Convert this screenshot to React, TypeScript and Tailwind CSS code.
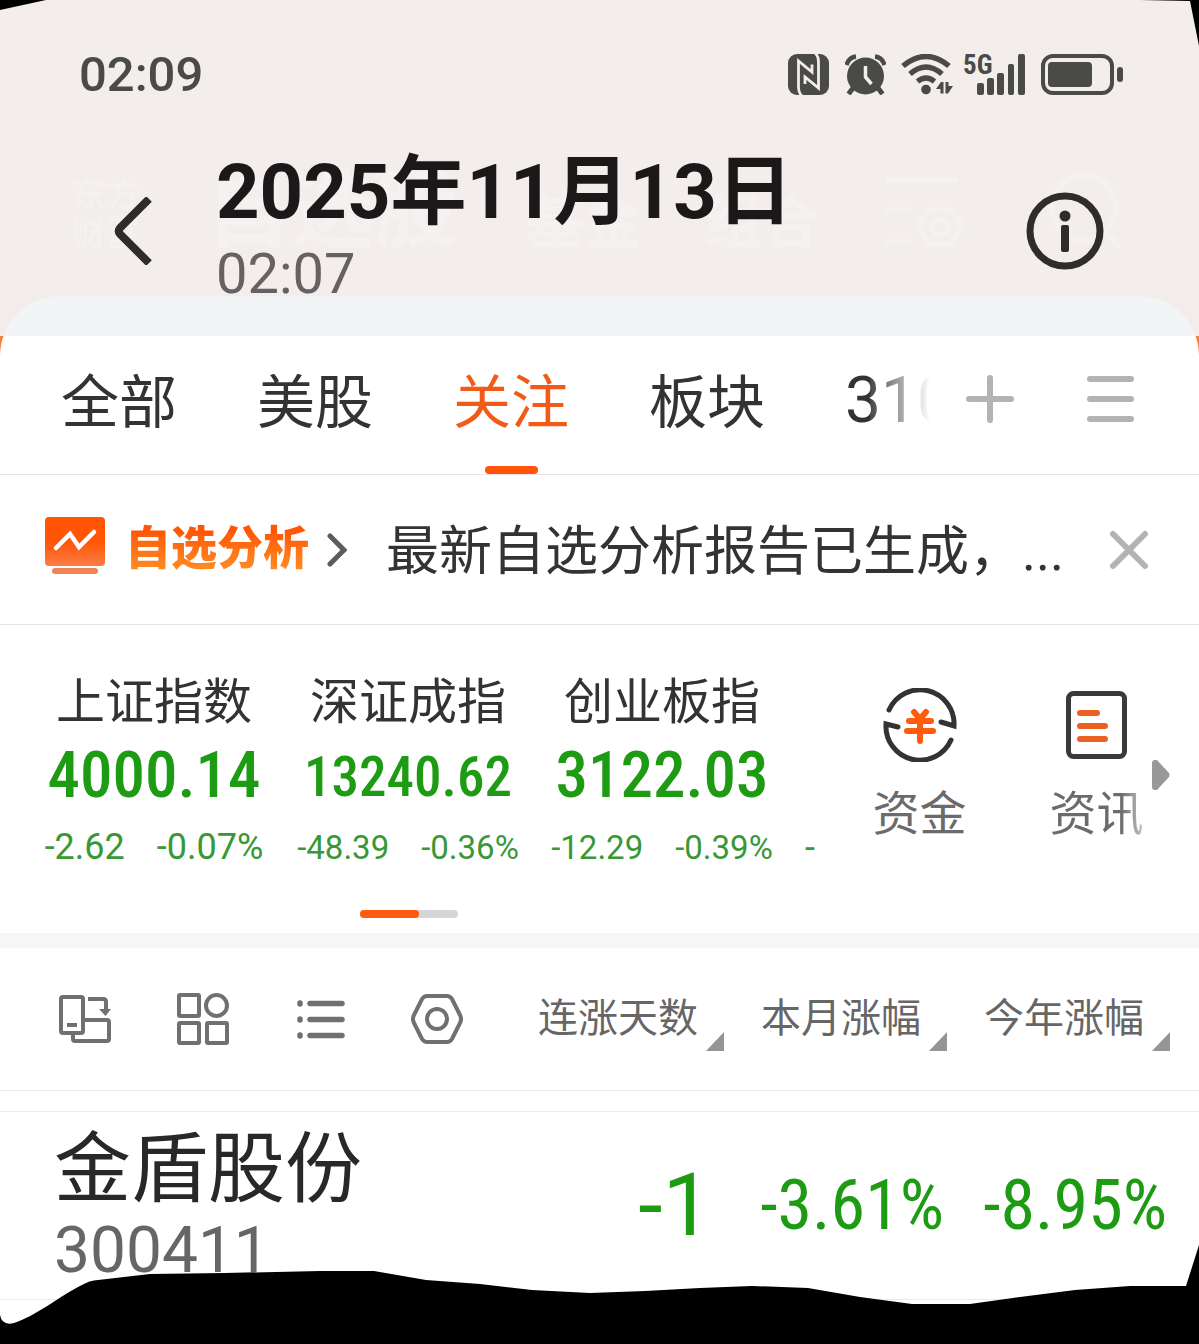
import React from "react";

const INK = "#4a4a49";

function NfcIcon() {
  return (
    <svg width="41" height="41" viewBox="0 0 41 41" fill="none">
      <rect width="41" height="41" rx="9" fill={INK} />
      <path d="M14 42Q10.500 39 10.500 33V7L24 18V10.500" stroke="#f3eeec" strokeWidth="2.800" />
      <path d="M27 -1Q30.500 2 30.500 8V34L17 23V30" stroke="#f3eeec" strokeWidth="2.800" />
    </svg>
  );
}

function AlarmIcon() {
  return (
    <svg width="41" height="41" viewBox="0 0 41 41" fill="none">
      <circle cx="20.500" cy="22" r="18.500" fill={INK} />
      <path d="M1.500 11C3 6 6 3 11 2.500M39.500 11C38 6 35 3 30 2.500" stroke={INK} strokeWidth="4.500" />
      <path d="M8 34L3.500 40M33 34L37.500 40" stroke={INK} strokeWidth="5" />
      <path d="M20.500 12V23L26.500 30" stroke="#f3eeec" strokeWidth="3.500" />
    </svg>
  );
}

function WifiIcon() {
  return (
    <svg width="52" height="41" viewBox="0 0 52 41" fill="none">
      <path d="M2 12Q25 -7 48 12" stroke={INK} strokeWidth="5.500" />
      <path d="M9 20Q25 6 41 20" stroke={INK} strokeWidth="5.500" />
      <path d="M16.500 27.500Q25 20.500 33.500 27.500" stroke={INK} strokeWidth="5.500" />
      <circle cx="25" cy="35.500" r="4.800" fill={INK} />
      <path d="M35 35L40 28H42.500V39.500H39.500V35ZM44.500 28H47.500V32H52L47 39.500H44.500Z" fill={INK} />
    </svg>
  );
}

function SignalIcon() {
  return (
    <span className="relative block h-[41px] w-[62px]">
      <svg className="block" width="62" height="41" viewBox="0 0 62 41" fill={INK}>
        <rect x="14" y="29" width="7" height="12" rx="2" />
        <rect x="24" y="24" width="7" height="17" rx="2" />
        <rect x="34" y="19" width="7" height="22" rx="2" />
        <rect x="45" y="10" width="6" height="31" rx="2" />
        <rect x="55" y="0" width="7" height="41" rx="2" />
      </svg>
      <span className="absolute top-0 left-0 font-['Roboto_Condensed',Roboto,sans-serif] text-[27px] leading-[22px] font-bold text-[#4a4a49]">5G</span>
    </span>
  );
}

function BatteryIcon() {
  return (
    <svg width="82" height="41" viewBox="0 0 82 41" fill="none">
      <rect x="2" y="2" width="69" height="37" rx="10" stroke={INK} strokeWidth="4" />
      <rect x="7" y="8" width="44" height="25" rx="4" fill={INK} />
      <rect x="76" y="13" width="6" height="15" rx="3" fill={INK} />
    </svg>
  );
}

function GhostHeader() {
  return (
    <div aria-hidden="true" className="pointer-events-none absolute inset-x-0 top-[172px] flex h-20 items-end pl-[72px] font-bold text-[#f4f1f1]">
      <span className="w-[134px] text-[34px] leading-[38px]">东方<br />财富</span>
      <span className="w-[320px] text-[84px] leading-[80px]">自选股</span>
      <span className="w-[178px] text-[58px] leading-[58px]">基金</span>
      <span className="w-[180px] text-[58px] leading-[58px]">组合</span>
      <svg width="240" height="80" viewBox="0 0 240 80" fill="none" stroke="#f4f1f1" strokeWidth="6">
        <path d="M2 8H74M2 38H28M2 70H28" />
        <path d="M45 38H67L79 55L67 72H45L33 55Z" />
        <circle cx="56" cy="55" r="8" />
        <circle cx="200" cy="36" r="32" />
        <path d="M222 60L236 76" />
      </svg>
    </div>
  );
}

const tabs = ["全部", "美股", "关注", "板块"];

const indices = [
  { name: "上证指数", value: "4000.14", diff: "-2.62", pct: "-0.07%", large: true, largeDiff: true },
  { name: "深证成指", value: "13240.62", diff: "-48.39", pct: "-0.36%", large: false, largeDiff: false },
  { name: "创业板指", value: "3122.03", diff: "-12.29", pct: "-0.39%", large: true, largeDiff: false },
];

function AnalysisIcon() {
  return (
    <svg width="60" height="58" viewBox="0 0 60 58" fill="none">
      <defs>
        <linearGradient id="panel" x1="0" y1="0" x2="0" y2="1">
          <stop offset="0.500" stopColor="#ff5504" />
          <stop offset="1" stopColor="#fb7c46" />
        </linearGradient>
      </defs>
      <rect width="60" height="49" rx="4" fill="url(#panel)" />
      <path d="M11 31L25 17L34 30L49 15" stroke="#fff" strokeWidth="4.500" strokeLinecap="round" />
      <rect x="7" y="51" width="46" height="6" rx="3" fill="#f28352" />
    </svg>
  );
}

function FundsIcon() {
  return (
    <svg width="74" height="74" viewBox="0 0 74 74" fill="none" strokeLinecap="round">
      <path d="M6 22A34 34 0 0 1 71 38L58 34" stroke="#333" strokeWidth="5" />
      <path d="M68 52A34 34 0 0 1 3 36L15 39" stroke="#333" strokeWidth="5" />
      <path d="M31 24L37 31L43 24M26 33H48M24 43H50M37 32V53" stroke="#ff5a0e" strokeWidth="6" />
    </svg>
  );
}

function NewsIcon() {
  return (
    <svg width="61" height="68" viewBox="0 0 61 68" fill="none" strokeLinecap="round">
      <rect x="2.500" y="2.500" width="56" height="63" rx="5" stroke="#3a3a3a" strokeWidth="5" />
      <path d="M14 22H31M14 35H39M14 48H39" stroke="#ea6124" strokeWidth="6" />
    </svg>
  );
}

function RotateLayoutIcon() {
  return (
    <svg width="52" height="52" viewBox="0 0 52 52" fill="none" stroke="#707070" strokeWidth="4">
      <rect x="2" y="4" width="22" height="36" rx="2" />
      <path d="M8 32H18M14 40V46Q14 48 16 48H48Q50 48 50 46V29Q50 27 48 27H24" />
      <path d="M29 6H44Q47 6 47 9V19" />
      <path d="M40 16H52L46.500 23Z" fill="#707070" stroke="none" />
    </svg>
  );
}

function ModulesIcon() {
  return (
    <svg width="52" height="52" viewBox="0 0 52 52" fill="none" stroke="#707070" strokeWidth="4">
      <rect x="2" y="2" width="20" height="21" rx="1" />
      <circle cx="39.500" cy="12.500" r="10.500" />
      <rect x="2" y="30" width="20" height="20" rx="1" />
      <rect x="30" y="30" width="20" height="20" rx="1" />
    </svg>
  );
}

function ListIcon() {
  return (
    <svg width="50" height="52" viewBox="0 0 50 52" fill="none" stroke="#707070" strokeWidth="5.500" strokeLinecap="round">
      <path d="M15 10.500H47M15 26.500H47M15 42.500H47" />
      <path d="M5 10V11M5 26V27M5 42V43" />
    </svg>
  );
}

function SettingsIcon() {
  return (
    <svg width="52" height="52" viewBox="0 0 52 52" fill="none" stroke="#707070" strokeWidth="4">
      <path d="M16 3H36Q39 3 41 6L49 22Q51 26 49 30L41 46Q39 49 36 49H16Q13 49 11 46L3 30Q1 26 3 22L11 6Q13 3 16 3Z" />
      <circle cx="26" cy="26" r="10" />
    </svg>
  );
}

function SortHeader({ label }: { label: string }) {
  return (
    <button className="inline-flex items-end gap-2 text-[40px] leading-[64px] font-normal text-[#666]">
      {label}
      <svg width="18" height="19" viewBox="0 0 18 19" fill="#959597">
        <path d="M18 0V19H0Z" />
      </svg>
    </button>
  );
}

export default function App() {
  return (
    <div className="relative min-h-[1344px] w-full overflow-hidden bg-white font-[Roboto,'Noto_Sans_CJK_SC',sans-serif]">
      <header className="relative bg-[#f3eeec] pb-1">
        <GhostHeader />
        <div className="flex h-[148px] items-center justify-between pr-[76px] pl-[79px]">
          <span className="text-[49px] leading-none font-medium text-[#4a4a49]">02:09</span>
          <div className="flex items-center">
            <NfcIcon />
            <span className="ml-4"><AlarmIcon /></span>
            <span className="ml-[15px]"><WifiIcon /></span>
            <span className="ml-[10px]"><SignalIcon /></span>
            <span className="ml-4"><BatteryIcon /></span>
          </div>
        </div>
        <div className="relative flex h-[144px] items-start pr-[95px]">
          <button aria-label="返回" className="ml-[114px] pt-[49px]">
            <svg width="40" height="68" viewBox="0 0 40 68" fill="none">
              <path d="M35 2L6 31Q3.500 34 6 37L35 66" stroke="#2f2d2c" strokeWidth="8" />
            </svg>
          </button>
          <div className="ml-[62px] flex-1">
            <h1 className="text-[76px] leading-[88px] font-bold text-[#1a1818]">2025年11月13日</h1>
            <p className="text-[56px] leading-[76px] text-[#666162]">02:07</p>
          </div>
          <button aria-label="信息" className="pt-11">
            <svg width="78" height="78" viewBox="0 0 78 78" fill="none">
              <circle cx="39" cy="39" r="35" stroke="#2f2d2c" strokeWidth="7" />
              <circle cx="39" cy="24" r="5.500" fill="#2f2d2c" />
              <rect x="35" y="33" width="8" height="27" rx="2" fill="#2f2d2c" />
            </svg>
          </button>
        </div>
      </header>

      <main className="bg-[linear-gradient(#f3eceb_40px,#f0803c_40px,#f0803c_80px,#fff_80px)]">
        <div className="rounded-t-[60px] bg-[linear-gradient(#f3f4f6_40px,#fff_40px)] pt-10">
          <nav className="flex h-[139px] items-center border-b border-[#e4e4e4] pr-[65px] pl-[61px]">
            <div className="relative flex h-full flex-1 items-center gap-20 overflow-hidden">
              {tabs.map((t) => (
                <button
                  key={t}
                  className={
                    t === "关注"
                      ? "relative h-full shrink-0 pb-1 text-[58px] leading-none text-[#f25a17]"
                      : "h-full shrink-0 pb-1 text-[58px] leading-none text-[#333]"
                  }
                >
                  {t}
                  {t === "关注" && <span className="absolute bottom-0 left-8 h-2 w-[53px] rounded-full bg-[#ff550a]" />}
                </button>
              ))}
              <button className="h-full shrink-0 pb-2 text-[64px] leading-none text-[#333]">310</button>
              <span className="pointer-events-none absolute inset-y-0 right-0 w-[60px] bg-linear-to-r from-white/10 to-white" />
            </div>
            <button aria-label="添加" className="ml-9 pb-3">
              <svg width="48" height="48" viewBox="0 0 48 48" stroke="#b3b3b3" strokeWidth="6" strokeLinecap="round">
                <path d="M3 24H45M24 3V45" />
              </svg>
            </button>
            <button aria-label="菜单" className="ml-[73px] pb-3">
              <svg width="47" height="46" viewBox="0 0 47 46" stroke="#b3b3b3" strokeWidth="6" strokeLinecap="round">
                <path d="M3 3H44M3 23H44M3 43H44" />
              </svg>
            </button>
          </nav>

          <section className="flex h-[150px] items-center border-b border-[#e4e4e4] pr-[50px] pl-[45px]">
            <a href="#analysis" className="flex shrink-0 items-center">
              <span className="pb-2"><AnalysisIcon /></span>
              <span className="ml-5 bg-linear-to-b from-[#ff5504] from-20% to-[#ff9a2a] bg-clip-text pb-1 text-[46px] leading-[60px] font-black text-transparent">
                自选分析
              </span>
              <svg className="ml-[18px]" width="20" height="34" viewBox="0 0 20 34" fill="none" stroke="#5c5c5c" strokeWidth="5" strokeLinecap="round">
                <path d="M3 3L17 17L3 31" />
              </svg>
            </a>
            <p className="ml-[39px] flex-1 pt-1 text-[53px] leading-[60px] whitespace-nowrap text-[#333]">最新自选分析报告已生成，...</p>
            <button aria-label="关闭">
              <svg width="40" height="40" viewBox="0 0 40 40" stroke="#b3b3b3" strokeWidth="6" strokeLinecap="round">
                <path d="M4 4L36 36M36 4L4 36" />
              </svg>
            </button>
          </section>

          <section className="flex h-[308px]">
            <div className="w-[817px] shrink-0">
              <div className="flex overflow-hidden pt-[46px] pl-[27px]">
                {indices.map((x) => (
                  <div key={x.name} className="flex w-[254px] shrink-0 flex-col items-center whitespace-nowrap">
                    <span className="text-[49px] leading-[64px] text-[#333]">{x.name}</span>
                    <span
                      className={
                        x.large
                          ? "font-['Roboto_Condensed',Roboto,sans-serif] text-[65px] leading-[80px] font-medium text-[#1d9b13]"
                          : "font-['Roboto_Condensed',Roboto,sans-serif] text-[55px] leading-[84px] font-medium text-[#1d9b13]"
                      }
                    >
                      {x.value}
                    </span>
                    <span
                      className={
                        x.largeDiff
                          ? "flex h-[64px] items-center gap-8 text-[36px] text-[#389836]"
                          : x.large
                            ? "flex h-[66px] items-center gap-8 text-[33px] text-[#389836]"
                            : "flex h-[58px] items-center gap-8 text-[33px] text-[#389836]"
                      }
                    >
                      <span>{x.diff}</span>
                      <span>{x.pct}</span>
                    </span>
                  </div>
                ))}
                <span className="flex h-[212px] items-end pb-2 pl-4 text-[36px] text-[#389836]">-</span>
              </div>
              <div className="mx-auto mt-[27px] h-2 w-[98px] rounded-full bg-[#d5d5da]">
                <div className="h-2 w-[59px] rounded-full bg-[#ff5a12]" />
              </div>
            </div>
            <div className="relative flex flex-1 pt-[63px] pl-[14px]">
              <button className="flex w-[177px] flex-col items-center self-start">
                <FundsIcon />
                <span className="mt-5 text-[47px] leading-[64px] text-[#6b6b6b]">资金</span>
              </button>
              <button className="flex w-[177px] flex-col items-center self-start pt-[3px]">
                <NewsIcon />
                <span className="mt-[23px] bg-linear-to-r from-[#6b6b6b] from-75% to-[#c8c8c8] bg-clip-text text-[47px] leading-[64px] text-transparent">
                  资讯
                </span>
              </button>
              <svg className="absolute top-[135px] right-[29px]" width="18" height="30" viewBox="0 0 18 30" fill="#999">
                <path d="M0 3Q0 0 3 0H5L17 13Q18 15 17 17L5 30H3Q0 30 0 27Z" />
              </svg>
            </div>
          </section>

          <div className="h-[15px] bg-[#f6f6f6]" />

          <table className="w-full table-fixed border-collapse">
            <colgroup>
              <col />
              <col className="w-[223px]" />
              <col className="w-[223px]" />
              <col className="w-[252px]" />
            </colgroup>
            <thead>
              <tr className="h-[142px] border-b border-[#ebebeb]">
                <th className="pl-[59px]">
                  <div className="flex items-center gap-[66px]">
                    <button aria-label="切换布局"><RotateLayoutIcon /></button>
                    <button aria-label="模块"><ModulesIcon /></button>
                    <button aria-label="列表"><ListIcon /></button>
                    <button aria-label="设置"><SettingsIcon /></button>
                  </div>
                </th>
                <th className="text-right"><SortHeader label="连涨天数" /></th>
                <th className="text-right"><SortHeader label="本月涨幅" /></th>
                <th className="pr-[29px] text-right"><SortHeader label="今年涨幅" /></th>
              </tr>
            </thead>
            <tbody>
              <tr className="h-[21px] border-b border-[#ebebeb]">
                <td colSpan={4} />
              </tr>
              <tr className="h-[188px] border-b border-[#ebebeb] text-right whitespace-nowrap text-[#1d9b13]">
                <td className="pl-[54px] text-left align-top">
                  <div className="pt-3 text-[77px] leading-[92px] text-[#282828]">金盾股份</div>
                  <div className="text-[64px] leading-[70px] text-[#666]">300411</div>
                </td>
                <td className="pr-3 text-[88px] leading-none">-1</td>
                <td className="pr-[3px] font-['Roboto_Condensed',Roboto,sans-serif] text-[70px] leading-none">-3.61%</td>
                <td className="pr-8 font-['Roboto_Condensed',Roboto,sans-serif] text-[70px] leading-none">-8.95%</td>
              </tr>
            </tbody>
          </table>
        </div>
      </main>

      <svg className="pointer-events-none absolute top-0 left-0 h-12 w-full" viewBox="0 0 1199 48" preserveAspectRatio="none">
        <path d="M0 0H46L0 10ZM1140 0H1199V46L1190 1Z" />
      </svg>
      <svg className="pointer-events-none absolute bottom-0 left-0 h-[104px] w-full" viewBox="0 0 1199 104" preserveAspectRatio="none">
        <path d="M0 75Q2 86 14 83C36 76 60 56 80 46Q90 40 98 40L150 34L225 33L320 31H374L426 40L480 44L532 50L590 53L645 51L700 48L752 46L808 48L860 57L912 64H970L1020 57L1075 50L1130 46H1186L1199 5V104H0Z" />
      </svg>
    </div>
  );
}
